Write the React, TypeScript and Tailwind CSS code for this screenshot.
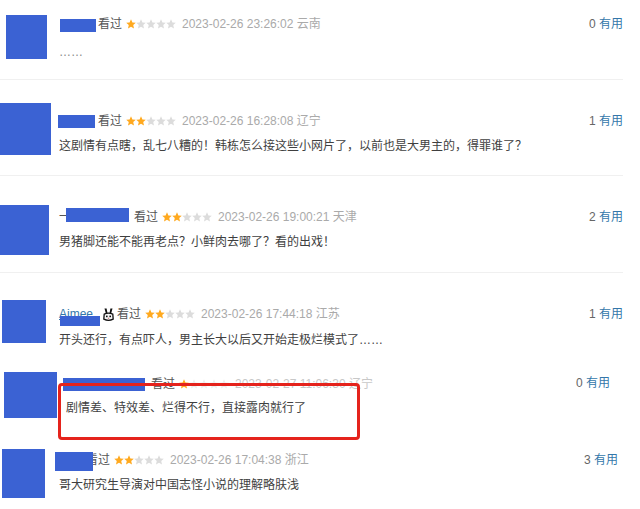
import React from 'react';

// One comment row of the collage; class strings carry the per-row offsets.
interface Review {
	count: number;
	stars: number;
	date: string;
	text: string;
	row: string;
	avatar: string;
	body: string;
	textMt: string;
	right: string;
	nameW: string;
	mask: string;
	name?: React.ReactNode;
	faded?: boolean;
}

const Star = ({ on, faded }: { on: boolean; faded?: boolean }) => (
	<svg width="10" height="10" viewBox="1 1.5 22 20.5" className="shrink-0">
		<path
			d="M12 1.5l3.1 6.9 7.4.7-5.6 5 1.7 7.4L12 17.7l-6.6 3.8 1.7-7.4-5.6-5 7.4-.7z"
			fill={on ? '#ffa91f' : faded ? '#eeeeee' : '#dcdcdc'}
		/>
	</svg>
);

const Bunny = () => (
	<svg width="11" height="13" viewBox="0 0 11 13" className="ml-[3px] mr-[3px]">
		<path d="M1.5 0.5 L3 6 L4.6 6 L3.6 0.5 Z" fill="#111" />
		<path d="M9.5 0.5 L8 6 L6.4 6 L7.4 0.5 Z" fill="#111" />
		<path d="M1.2 6.2 Q5.5 4.2 9.8 6.2 L10.2 11.2 Q5.5 13.4 0.8 11.2 Z" fill="#f4f4f4" stroke="#111" strokeWidth="1.3" />
		<rect x="3" y="7.6" width="1.6" height="1.6" fill="#111" />
		<rect x="6.4" y="7.6" width="1.6" height="1.6" fill="#111" />
		<rect x="4.9" y="9.8" width="1.2" height="1" fill="#c66" />
	</svg>
);

const reviews: Review[] = [
	{
		count: 0,
		stars: 1,
		date: '2023-02-26 23:26:02 云南',
		text: '……',
		row: 'h-[80px] w-[623px] border-b border-[#f0f0f0]',
		avatar: 'ml-[6px] mt-[15px] w-[41px] h-[44px]',
		body: 'ml-[12px] pt-[16px]',
		textMt: 'mt-[12px] text-[#888]',
		right: 'mt-[16px]',
		nameW: 'w-[39px]',
		mask: 'left-[1px] top-[3px] w-[36px] h-[13px]',
	},
	{
		count: 1,
		stars: 2,
		date: '2023-02-26 16:28:08 辽宁',
		text: '这剧情有点瞎，乱七八糟的！韩栋怎么接这些小网片了，以前也是大男主的，得罪谁了？',
		row: 'h-[96px] w-[623px] border-b border-[#f0f0f0]',
		avatar: 'mt-[23px] w-[51px] h-[52px]',
		body: 'ml-[8px] pt-[33px]',
		textMt: 'mt-[9px]',
		right: 'mt-[33px]',
		nameW: 'w-[39px]',
		mask: '-left-[1px] top-[2px] w-[37px] h-[13px]',
	},
	{
		count: 2,
		stars: 2,
		date: '2023-02-26 19:00:21 天津',
		text: '男猪脚还能不能再老点？小鲜肉去哪了？看的出戏！',
		row: 'h-[97px] w-[623px] border-b border-[#f0f0f0]',
		avatar: 'mt-[29px] w-[49px] h-[50px]',
		body: 'ml-[10px] pt-[33px]',
		textMt: 'mt-[9px]',
		right: 'mt-[33px]',
		nameW: 'w-[75px]',
		mask: 'left-[7px] -top-[1px] w-[63px] h-[14px]',
		name: <span className="text-[#555]">一</span>,
	},
	{
		count: 1,
		stars: 2,
		date: '2023-02-26 17:44:18 江苏',
		text: '开头还行，有点吓人，男主长大以后又开始走极烂模式了……',
		row: 'h-[92px] w-[623px]',
		avatar: 'ml-[2px] mt-[27px] w-[44px] h-[43px]',
		body: 'ml-[13px] pt-[33px]',
		textMt: 'mt-[10px]',
		right: 'mt-[33px]',
		nameW: 'w-[58px]',
		mask: 'left-[1px] top-[10px] w-[40px] h-[10px]',
		name: (
			<span className="flex items-center">
				<span className="text-[#3377aa] underline w-[41px]">Aimee</span>
				<Bunny />
			</span>
		),
	},
	{
		count: 0,
		stars: 1,
		date: '2023-02-27 11:06:30 辽宁',
		text: '剧情差、特效差、烂得不行，直接露肉就行了',
		row: 'h-[75px] w-[610px]',
		avatar: 'ml-[4px] mt-[7px] w-[53px] h-[46px]',
		body: 'ml-[9px] pt-[11px]',
		textMt: 'mt-[8px]',
		right: 'mt-[10px]',
		nameW: 'w-[85px]',
		mask: '-left-[3px] top-[2px] w-[82px] h-[13px]',
		faded: true,
	},
	{
		count: 3,
		stars: 2,
		date: '2023-02-26 17:04:38 浙江',
		text: '哥大研究生导演对中国志怪小说的理解略肤浅',
		row: 'h-[69px] w-[618px]',
		avatar: 'ml-[2px] mt-[9px] w-[43px] h-[49px]',
		body: 'ml-[14px] pt-[12px]',
		textMt: 'mt-[9px]',
		right: 'mt-[12px]',
		nameW: 'w-[27px]',
		mask: '-left-[4px] top-[0px] w-[38px] h-[19px]',
	},
];

const ReviewRow = ({ r }: { r: Review }) => (
	<div className={`relative flex shrink-0 ${r.row}`}>
		<div className={`shrink-0 bg-[#3b62d3] ${r.avatar}`} />
		<div className={`flex-1 ${r.body}`}>
			<div className="flex items-center h-4 leading-4 text-[12px] whitespace-nowrap">
				<span className={`relative flex items-center h-4 shrink-0 ${r.nameW}`}>
					{r.name}
					<span className={`absolute bg-[#3b62d3] ${r.mask}`} />
				</span>
				<span className="text-[#555]">看过</span>
				<span className="flex items-center ml-[4px] mr-[6px]">
					{[0, 1, 2, 3, 4].map((i) => (
						<Star key={i} on={i < r.stars} faded={r.faded} />
					))}
				</span>
				<span className={r.faded ? 'text-[#c8c8c8]' : 'text-[#aaa]'}>{r.date}</span>
			</div>
			<div className={`h-4 leading-4 text-[12px] text-[#3f3f3f] whitespace-nowrap ${r.textMt}`}>
				{r.text}
			</div>
		</div>
		<div className={`shrink-0 h-4 leading-4 text-[12px] whitespace-nowrap ${r.right}`}>
			<span className="text-[#666]">{r.count} </span>
			<span className="text-[#3377aa]">有用</span>
		</div>
		{r.faded && (
			<div className="absolute left-[58px] top-[18px] w-[302px] h-[57px] border-[3px] border-[#e5231c] rounded-[4px]" />
		)}
	</div>
);

export default function App() {
	return (
		<div className="w-[640px] h-[509px] overflow-hidden bg-white flex flex-col font-['Liberation_Sans','Noto_Sans_CJK_SC',sans-serif]">
			{reviews.map((r, i) => (
				<ReviewRow key={i} r={r} />
			))}
		</div>
	);
}
